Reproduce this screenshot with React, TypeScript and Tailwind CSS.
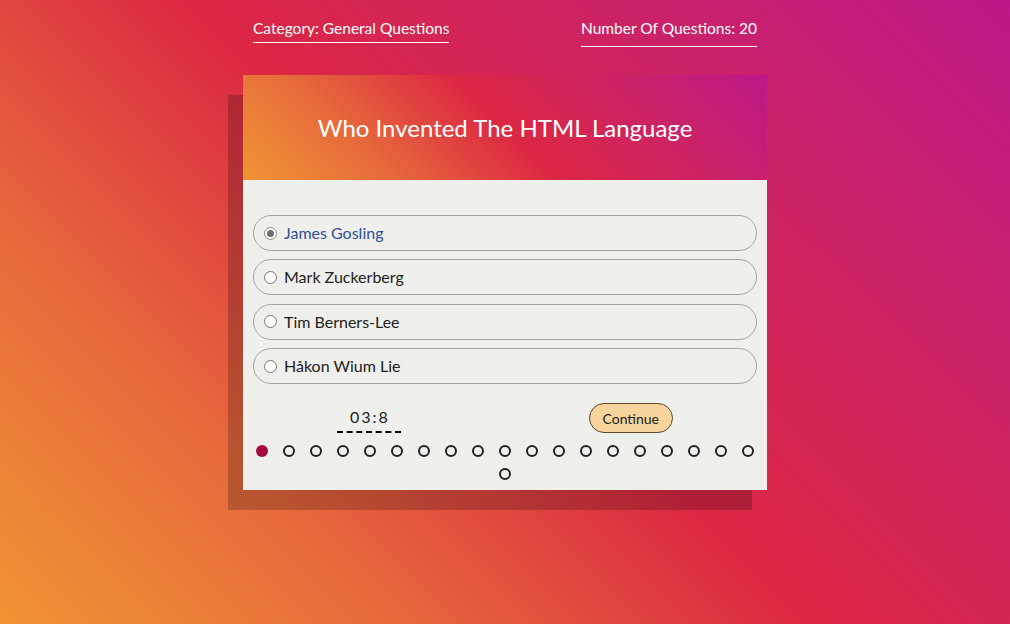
const ANSWERS = ["James Gosling", "Mark Zuckerberg", "Tim Berners-Lee", "Håkon Wium Lie"];
const TOTAL = 20;

const GRADIENT =
  "bg-[linear-gradient(45deg,#f09433_0%,#e6683c_25%,#dc2743_50%,#cc2366_75%,#bc1888_100%)]";

function Radio({ checked }: { checked: boolean }) {
  return (
    <span
      className={
        "flex h-[13px] w-[13px] shrink-0 items-center justify-center rounded-full border bg-white " +
        (checked ? "border-[#8a8a8a]" : "border-[#767676]")
      }
    >
      {checked && <span className="h-[7px] w-[7px] rounded-full bg-[#6f6f6f]" />}
    </span>
  );
}

export default function App() {
  const selected = 0;
  const current = 0;

  return (
    <div
      className={`min-h-[624px] w-full ${GRADIENT} font-['Lato','Liberation_Sans',sans-serif]`}
    >
      <div className="mx-auto w-[524px] pt-[16px]">
        <div className="flex items-start justify-between px-[10px] text-[15.5px] leading-[24px] text-white">
          <span className="border-b border-white pb-[2px]">Category: General Questions</span>
          <span className="border-b border-white pb-[6px]">Number Of Questions: 20</span>
        </div>

        <div className="mt-[28px] bg-[#efefeb] shadow-[-15px_20px_0_0_rgba(0,0,0,0.2)]">
          <div className={`flex h-[105px] items-center justify-center ${GRADIENT}`}>
            <h2 className="text-[24px] leading-[32px] text-white">Who Invented The HTML Language</h2>
          </div>

          <div className="px-[10px] pb-[10px] pt-[35px]">
            <div className="flex flex-col gap-[8.4px]">
              {ANSWERS.map((a, i) => (
                <label
                  key={a}
                  className="flex h-[36px] items-center gap-[7px] rounded-full border border-[#a3a3a0] pl-[10px] text-[16px]"
                >
                  <Radio checked={i === selected} />
                  <span className={i === selected ? "text-[#2f4f96]" : "text-[#222]"}>{a}</span>
                </label>
              ))}
            </div>

            <div className="mt-[19px] flex items-start justify-between px-[84px]">
              <div className="border-b-2 border-dashed border-black pb-[4px] pl-[13px] pr-[11px] pt-[4px] text-[16px] leading-[20px] tracking-[2px] text-[#222]">
                03:8
              </div>
              <button className="h-[30px] rounded-full border border-[#5c4a2c] bg-[#f6d49c] px-[13px] text-[14px] text-[#222]">
                Continue
              </button>
            </div>

            <div className="mt-[12px] flex flex-wrap justify-center gap-x-[15px] gap-y-[11px]">
              {Array.from({ length: TOTAL }).map((_, i) => (
                <span
                  key={i}
                  className={
                    "h-[12px] w-[12px] rounded-full " +
                    (i === current ? "bg-[#a60a3d]" : "border-2 border-[#222]")
                  }
                />
              ))}
            </div>
          </div>
        </div>
      </div>
    </div>
  );
}
